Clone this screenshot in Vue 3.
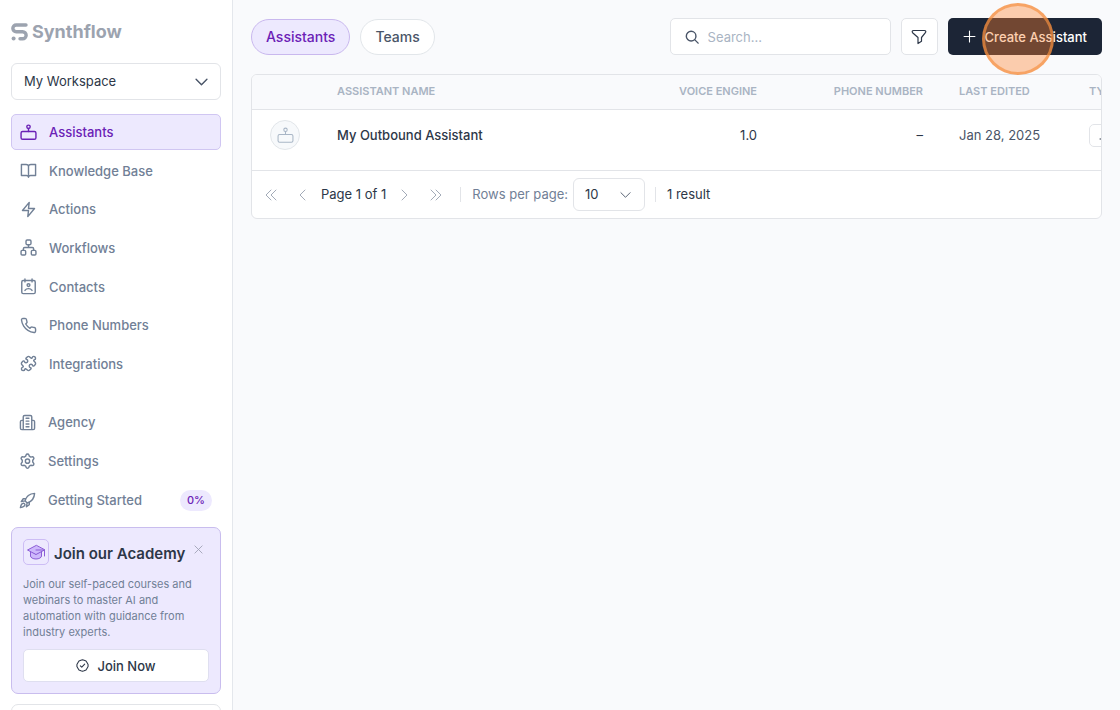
<script setup>
import { ref } from 'vue'

const workspace = ref('My Workspace')
const rows = ref('10')
const query = ref('')

const bot = '<rect x="1.5" y="10.5" width="21" height="11" rx="2.2"/><circle cx="12" cy="4" r="2.4"/><path d="M12 6.4v4.1"/>'

const primary = [
  { label: 'Assistants', active: true, icon: bot },
  { label: 'Knowledge Base', icon: '<path d="M12 20V6.5C12 4.6 10.400 3.500 8.500 3.500H2V19h7c1.700 0 3 .8 3 2.500 0-1.700 1.300-2.500 3-2.500h7V3.500h-6.500C13.600 3.500 12 4.600 12 6.500"/>' },
  { label: 'Actions', icon: '<path d="M13 2 3.500 13.500H12L11 22l9.500-11.500H12z"/>' },
  { label: 'Workflows', icon: '<rect x="8.500" y="1.500" width="7" height="6.500" rx="1.500"/><rect x="1.500" y="16" width="6.500" height="6.500" rx="1.500"/><rect x="16" y="16" width="6.500" height="6.500" rx="1.500"/><path d="M12 8v4M4.700 16v-2c0-1.200.8-2 2-2h10.600c1.200 0 2 .8 2 2v2"/>' },
  { label: 'Contacts', icon: '<rect x="2.500" y="3.500" width="19" height="18.500" rx="2"/><path d="M7 1.500v4M17 1.500v4M7 17.500c1.200-1.800 2.800-2.500 5-2.500s3.800.7 5 2.500"/><circle cx="12" cy="10" r="2"/>' },
  { label: 'Phone Numbers', icon: '<path d="M22 16.920v3a2 2 0 0 1-2.180 2 19.790 19.790 0 0 1-8.630-3.070 19.500 19.500 0 0 1-6-6 19.790 19.790 0 0 1-3.070-8.670A2 2 0 0 1 4.110 2h3a2 2 0 0 1 2 1.720c.127.960.361 1.903.700 2.810a2 2 0 0 1-.450 2.110L8.090 9.910a16 16 0 0 0 6 6l1.270-1.270a2 2 0 0 1 2.110-.450c.907.339 1.850.573 2.810.700A2 2 0 0 1 22 16.920z"/>' },
  { label: 'Integrations', icon: '<path d="M15.390 4.390a1 1 0 0 0 1.680-.474 2.500 2.500 0 1 1 3.014 3.015 1 1 0 0 0-.474 1.680l1.683 1.682a2.414 2.414 0 0 1 0 3.414L19.610 15.390a1 1 0 0 1-1.680-.474 2.500 2.500 0 1 0-3.014 3.015 1 1 0 0 1 .474 1.680l-1.683 1.682a2.414 2.414 0 0 1-3.414 0L8.610 19.610a1 1 0 0 0-1.680.474 2.500 2.500 0 1 1-3.014-3.015 1 1 0 0 0 .474-1.680l-1.683-1.682a2.414 2.414 0 0 1 0-3.414L4.390 8.610a1 1 0 0 1 1.680.474 2.500 2.500 0 1 0 3.014-3.015 1 1 0 0 1-.474-1.680l1.683-1.682a2.414 2.414 0 0 1 3.414 0z"/>' }
]

const secondary = [
  { label: 'Agency', icon: '<path d="M6 22V4a2 2 0 0 1 2-2h8a2 2 0 0 1 2 2v18M6 9H4a2 2 0 0 0-2 2v9a2 2 0 0 0 2 2h16a2 2 0 0 0 2-2v-9a2 2 0 0 0-2-2h-2M10 6h4M10 10h4M10 14h4M10 18h4"/>' },
  { label: 'Settings', icon: '<path d="M9.400 4.500 10 2.900c.3-.8 1-1.400 2-1.400s1.700.6 2 1.400l.6 1.600 2 1.200 1.900-.3c.9-.1 1.700.2 2.200 1s.4 1.700-.2 2.400l-1.100 1.400v2.600l1.100 1.400c.6.7.7 1.600.2 2.400s-1.300 1.100-2.200 1l-1.900-.3-2 1.200-.6 1.600c-.3.8-1 1.400-2 1.400s-1.700-.6-2-1.400l-.6-1.600-2-1.200-1.900.3c-.9.1-1.700-.2-2.200-1s-.4-1.700.2-2.400l1.100-1.400v-2.600L3.500 8.800c-.6-.7-.7-1.600-.2-2.400s1.300-1.100 2.200-1l1.900.3z"/><circle cx="12" cy="11.500" r="3"/>' },
  { label: 'Getting Started', badge: '0%', icon: '<path d="M8.500 12.500c1.500-5.500 5.500-10 13.500-10.500-.5 8-5 12-10.500 13.500zM9.500 9.500H6L3.200 13.500l5.300-1M14.500 14.500V18l-4 2.800 1-5.300M8.500 12.500l3 3M6.500 15.800c1 .3 1.700 1 2 2C8 20.500 5.500 21.500 2 22c.5-3.500 1.500-6 4.500-6.200z"/>' }
]
</script>

<template>
  <div class="app">
    <aside class="sidebar">
      <a class="logo" href="#" aria-label="Synthflow home">
        <svg class="mark" viewBox="0 0 17 18" aria-hidden="true">
          <path d="M15 2H5.200A3.200 3.200 0 0 0 5.200 8.700H11.600A3.500 3.500 0 0 1 11.600 15.800H9" />
          <circle cx="2.600" cy="15.600" r="2" />
        </svg>
        <span>Synthflow</span>
      </a>

      <div class="picker workspace">
        <select v-model="workspace" aria-label="Workspace">
          <option>My Workspace</option>
        </select>
        <svg viewBox="0 0 12 12" aria-hidden="true"><path d="m1 3.500 5 5 5-5" /></svg>
      </div>

      <nav class="primary" aria-label="Main">
        <a v-for="item in primary" :key="item.label" href="#" class="item" :class="{ active: item.active }">
          <svg class="icon" viewBox="0 0 24 24" aria-hidden="true" v-html="item.icon"></svg>
          <span>{{ item.label }}</span>
        </a>
      </nav>

      <nav class="secondary" aria-label="Account">
        <a v-for="item in secondary" :key="item.label" href="#" class="item">
          <svg class="icon" viewBox="0 0 24 24" aria-hidden="true" v-html="item.icon"></svg>
          <span>{{ item.label }}</span>
          <span v-if="item.badge" class="badge">{{ item.badge }}</span>
        </a>
      </nav>

      <section class="academy">
        <header>
          <span class="cap">
            <svg viewBox="0 0 20 20" aria-hidden="true">
              <path d="M4.500 9v5c0 1.600 2.500 3 5.500 3s5.500-1.400 5.500-3V9L10 12z" />
              <path d="M10 3.500 1.500 8l8.500 4.500L18.500 8z" />
              <path class="line" d="M10 8h8.500v6" />
            </svg>
          </span>
          <h2>Join our Academy</h2>
          <button class="close" type="button" aria-label="Close">
            <svg viewBox="0 0 10 10" aria-hidden="true"><path d="m1 1 8 8M9 1 1 9" /></svg>
          </button>
        </header>
        <p>Join our self-paced courses and webinars to master AI and automation with guidance from industry experts.</p>
        <button class="join" type="button">
          <svg viewBox="0 0 24 24" aria-hidden="true">
            <path d="M12 1.500 15 2.500 18.500 3.800 20.500 7 22.300 10 22.300 14 20.500 17 18.500 20.200 15 21.500 12 22.500 9 21.500 5.500 20.200 3.500 17 1.700 14 1.700 10 3.500 7 5.500 3.800 9 2.500zM8 12.500l2.700 2.700L16 9.500" />
          </svg>
          <span>Join Now</span>
        </button>
      </section>

      <div class="next-card"></div>
    </aside>

    <main>
      <div class="toolbar">
        <button class="tab active" type="button">Assistants</button>
        <button class="tab" type="button">Teams</button>
        <label class="search">
          <svg viewBox="0 0 16 16" aria-hidden="true"><circle cx="7" cy="7" r="5.500" /><path d="m11 11 4 4" /></svg>
          <input v-model="query" type="text" placeholder="Search..." aria-label="Search" />
        </label>
        <button class="filter" type="button" aria-label="Filter">
          <svg viewBox="0 0 16 16" aria-hidden="true"><path d="M2.500 1.500h11c1.300 0 1.700 1.300.9 2.200L10.500 8.500v3.800L7 14.500V8.500L1.600 3.700C.8 2.800 1.200 1.500 2.500 1.500z" /></svg>
        </button>
        <div class="create-wrap">
          <button class="create" type="button">
            <svg viewBox="0 0 12 12" aria-hidden="true"><path d="M6 1v10M1 6h10" /></svg>
            <span>Create Assistant</span>
          </button>
          <span class="halo" aria-hidden="true"></span>
        </div>
      </div>

      <section class="card">
        <div class="scroller">
          <table>
            <colgroup>
              <col class="c-avatar" /><col /><col class="c-voice" /><col class="c-phone" /><col class="c-edited" /><col class="c-type" />
            </colgroup>
            <thead>
              <tr>
                <th></th>
                <th>ASSISTANT NAME</th>
                <th class="num">VOICE ENGINE</th>
                <th class="num">PHONE NUMBER</th>
                <th>LAST EDITED</th>
                <th>TYPE</th>
              </tr>
            </thead>
            <tbody>
              <tr>
                <td><span class="avatar"><svg viewBox="0 0 24 24" aria-hidden="true" v-html="bot"></svg></span></td>
                <td class="name">My Outbound Assistant</td>
                <td class="num">1.0</td>
                <td class="num">–</td>
                <td class="date">Jan 28, 2025</td>
                <td><span class="type"><svg viewBox="0 0 12 12" aria-hidden="true"><path d="M1 10h3" /></svg></span></td>
              </tr>
            </tbody>
          </table>
        </div>
        <footer>
          <button class="page" type="button" aria-label="First page"><svg viewBox="0 0 12 12"><path d="M6 1 1 6l5 5M11 1 6 6l5 5" /></svg></button>
          <button class="page" type="button" aria-label="Previous page"><svg viewBox="0 0 12 12"><path d="M8 1 3 6l5 5" /></svg></button>
          <span class="position text">Page 1 of 1</span>
          <button class="page" type="button" aria-label="Next page"><svg viewBox="0 0 12 12"><path d="m4 1 5 5-5 5" /></svg></button>
          <button class="page" type="button" aria-label="Last page"><svg viewBox="0 0 12 12"><path d="m1 1 5 5-5 5M6 1l5 5-5 5" /></svg></button>
          <span class="rule"></span>
          <label class="rows text" for="rows">Rows per page:</label>
          <div class="picker per-page">
            <select id="rows" v-model="rows">
              <option>10</option>
            </select>
            <svg viewBox="0 0 12 12" aria-hidden="true"><path d="m1 3.500 5 5 5-5" /></svg>
          </div>
          <span class="rule"></span>
          <span class="text">1 result</span>
        </footer>
      </section>
    </main>
  </div>
</template>

<style>
body {
  background: #f9fafc;
}
</style>

<style scoped>
.app {
  display: grid;
  grid-template-columns: 233px minmax(0, 1fr);
  height: 100vh;
  overflow: hidden;
  font-family: Inter, "Liberation Sans", sans-serif;
  font-size: 13px;
  line-height: 16px;
  color: #2d3748;
}
.app *,
.app :deep(*) {
  box-sizing: border-box;
}
svg {
  flex: none;
  display: block;
  fill: none;
  stroke: currentColor;
  stroke-linecap: round;
  stroke-linejoin: round;
}
button,
select,
input {
  font: inherit;
  color: inherit;
}
button {
  display: flex;
  align-items: center;
  justify-content: center;
  padding: 0;
  background: none;
  border: 0;
}
a {
  color: inherit;
  text-decoration: none;
}

.sidebar {
  padding: 20px 11px 0;
  background: #fff;
  border-right: 1px solid #e4e7ec;
  overflow: hidden;
}
.logo {
  display: flex;
  align-items: center;
  gap: 4px;
  height: 24px;
  color: #9ca3af;
  font-size: 18px;
  line-height: 24px;
  font-weight: 700;
}
.mark {
  width: 17px;
  height: 18px;
  stroke-width: 3.400;
}
.mark circle {
  fill: currentColor;
  stroke: none;
}

.picker {
  position: relative;
  background: #fff;
  border: 1px solid #e2e4e8;
  border-radius: 6px;
}
.picker select {
  display: block;
  width: 100%;
  height: 100%;
  border: 0;
  border-radius: 6px;
  background: none;
  appearance: none;
}
.picker svg {
  position: absolute;
  top: 50%;
  transform: translateY(-50%);
  color: #4a5568;
  pointer-events: none;
}
.workspace {
  height: 37px;
  margin-top: 19px;
}
.workspace select {
  padding: 0 32px 2px 12px;
}
.workspace svg {
  right: 12px;
  width: 13px;
  height: 13px;
  stroke-width: 1.300;
}

.primary {
  display: flex;
  flex-direction: column;
  justify-content: space-between;
  height: 268px;
  margin-top: 14px;
}
.secondary {
  display: flex;
  flex-direction: column;
  gap: 3px;
  margin-top: 22px;
}
.item {
  display: flex;
  align-items: center;
  gap: 12px;
  height: 36px;
  padding: 0 8px;
  border: 1px solid transparent;
  border-radius: 5px;
  color: #718096;
  font-weight: 500;
}
.item.active {
  color: #6b21b6;
  background: #ede9fe;
  border-color: #d0c6f2;
}
.icon {
  width: 17px;
  height: 17px;
  stroke-width: 2;
}
.secondary .item {
  padding-left: 7px;
}
.badge {
  margin-left: auto;
  padding: 2px 7px;
  border-radius: 11px;
  background: #ede9fe;
  color: #6b21b6;
  font-size: 11px;
  line-height: 17px;
}

.academy {
  margin-top: 9px;
  padding: 11px;
  background: #ede9fe;
  border: 1px solid #c9bdee;
  border-radius: 7px;
}
.academy header {
  display: flex;
  align-items: center;
  gap: 5px;
}
.cap {
  display: grid;
  place-items: center;
  width: 26px;
  height: 26px;
  border: 1px solid #cdbdf5;
  border-radius: 5px;
  color: #8b5cd6;
}
.cap svg {
  width: 20px;
  height: 20px;
  fill: #cdb8fb;
}
.cap .line {
  fill: none;
}
h2 {
  margin: 4px 0 0;
  font-size: 15px;
  line-height: 20px;
  font-weight: 600;
  white-space: nowrap;
}
.close {
  width: 14px;
  height: 14px;
  margin: 0 4px 6px auto;
  color: #a0a3b5;
}
.close svg {
  width: 9px;
  height: 9px;
}
.academy p {
  margin: 11px 0 9px;
  color: #718096;
  font-size: 11px;
  line-height: 16px;
}
.join {
  gap: 8px;
  width: 100%;
  height: 33px;
  background: #fff;
  border: 1px solid #dfdff0;
  border-radius: 5px;
  font-weight: 500;
}
.join svg {
  width: 13px;
  height: 13px;
  stroke-width: 2;
}
.next-card {
  height: 120px;
  margin-top: 10px;
  border: 1px solid #e2e4e8;
  border-radius: 7px;
}

main {
  padding: 18px;
}
.toolbar {
  display: flex;
  align-items: center;
  gap: 10px;
}
.tab {
  height: 36px;
  padding: 0 14px;
  background: #fff;
  border: 1px solid #e2e6ea;
  border-radius: 18px;
  color: #4a5568;
  font-size: 14px;
  font-weight: 500;
}
.tab.active {
  background: #ede9fe;
  border-color: #c9b8ee;
  color: #6b21b6;
}
.search {
  display: flex;
  align-items: center;
  gap: 9px;
  width: 221px;
  height: 37px;
  margin-left: auto;
  padding: 0 14px;
  background: #fff;
  border: 1px solid #e2e4e8;
  border-radius: 5px;
}
.search svg {
  width: 14px;
  height: 14px;
  color: #4a5568;
  stroke-width: 1.600;
}
.search input {
  flex: 1;
  min-width: 0;
  padding: 0;
  border: 0;
  outline: 0;
  background: none;
}
.search input::placeholder {
  color: #a9b4c3;
  opacity: 1;
}
.filter {
  width: 37px;
  height: 37px;
  background: #fff;
  border: 1px solid #e2e4e8;
  border-radius: 5px;
}
.filter svg {
  width: 16px;
  height: 16px;
  stroke-width: 1.200;
}
.create-wrap {
  position: relative;
}
.create {
  gap: 9px;
  height: 37px;
  padding: 0 15px;
  background: #1c2536;
  border-radius: 5px;
  color: #fff;
  font-weight: 500;
}
.create svg {
  width: 13px;
  height: 13px;
}
.halo {
  position: absolute;
  top: -15px;
  left: 34px;
  width: 72px;
  height: 72px;
  background: rgba(255, 130, 45, 0.38);
  border: 3px solid rgba(245, 145, 65, 0.68);
  border-radius: 50%;
  pointer-events: none;
}

.card {
  margin-top: 19px;
  background: #fff;
  border: 1px solid #e2e4e8;
  border-radius: 6px;
  overflow: hidden;
}
.scroller {
  overflow: hidden;
}
table {
  width: calc(100% + 110px);
  table-layout: fixed;
  border-collapse: separate;
  border-spacing: 0;
}
.c-avatar {
  width: 67px;
}
.c-voice {
  width: 130px;
}
.c-phone {
  width: 166px;
}
.c-edited {
  width: 130px;
}
.c-type {
  width: 140px;
}
th {
  height: 35px;
  padding: 0 18px 2px;
  background: #f9fafc;
  border-bottom: 1px solid #e2e4e8;
  color: #a9b4c3;
  font-size: 11px;
  font-weight: 600;
  text-align: left;
  white-space: nowrap;
}
td {
  height: 61px;
  padding: 0 18px 10px;
  border-bottom: 1px solid #e2e4e8;
  white-space: nowrap;
}
th.num,
td.num {
  text-align: right;
}
.name {
  font-weight: 500;
}
.date {
  color: #4a5568;
}
.avatar {
  display: grid;
  place-items: center;
  width: 30px;
  height: 30px;
  background: #f7f9fb;
  border: 1px solid #e2e6ea;
  border-radius: 50%;
  color: #a9b6c6;
}
.avatar svg {
  width: 17px;
  height: 17px;
  stroke-width: 1.500;
}
.type {
  display: flex;
  align-items: center;
  width: 90px;
  height: 23px;
  padding: 0 9px;
  border: 1px solid #e2e4e8;
  border-radius: 5px;
}
.type svg {
  width: 12px;
  height: 12px;
}

footer {
  display: flex;
  align-items: center;
  height: 47px;
  padding-left: 13px;
}
.text {
  padding-bottom: 2px;
}
.page {
  width: 12px;
  height: 24px;
  color: #a3abb8;
}
.page + .page {
  margin-left: 20px;
}
.page svg {
  width: 12px;
  height: 12px;
}
.position {
  margin: 0 12px;
}
.rule {
  width: 1px;
  height: 15px;
  margin: 0 11px 0 18px;
  background: #e2e4e8;
}
.rows {
  margin-right: 5px;
  color: #718096;
}
.per-page {
  width: 72px;
  height: 33px;
}
.per-page + .rule {
  margin-left: 10px;
}
.per-page select {
  padding: 0 24px 2px 11px;
}
.per-page svg {
  right: 13px;
  width: 11px;
  height: 11px;
}
</style>
